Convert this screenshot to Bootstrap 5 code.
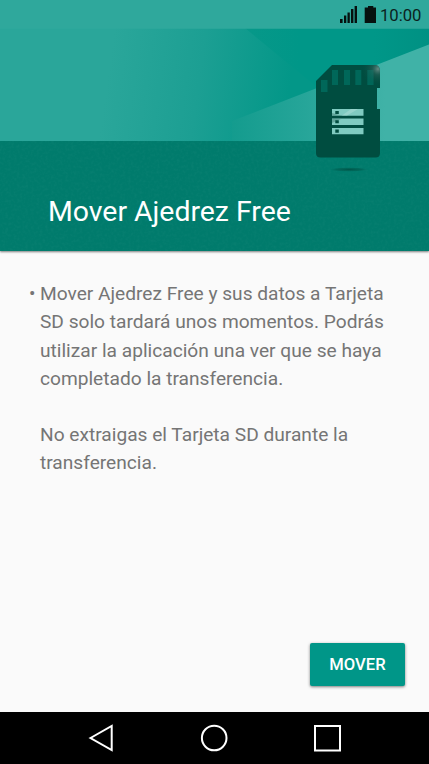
<!DOCTYPE html>
<html lang="es">
<head>
<meta charset="utf-8">
<meta name="viewport" content="width=device-width, initial-scale=1">
<title>Mover Ajedrez Free</title>
<link href="https://cdn.jsdelivr.net/npm/bootstrap@5.3.0/dist/css/bootstrap.min.css" rel="stylesheet">
<style>
body { font-family: Roboto, "Liberation Sans", sans-serif; background: #fafafa; color: #757575; }
.status { height: 28px; padding-right: 7.5px; color: #0b1f1c; }
.clock { font-size: 16.7px; line-height: 31px; margin-left: 4px; }
.hero { height: 251px; box-shadow: 0 1px 2px rgba(0,0,0,.5); }
.hero h1 { font-size: 28.4px; line-height: 34px; padding: 0 0 22px 48px; }
.notes { font-size: 19.15px; line-height: 28.15px; padding: 29.2px 30px 0 29px; }
.bullet { width: 11px; }
.move-btn { --bs-btn-bg: #009688; --bs-btn-color: #fff; --bs-btn-hover-bg: #00897b; --bs-btn-hover-color: #fff;
  --bs-btn-border-radius: 2px; --bs-btn-font-size: 16.6px; --bs-btn-font-weight: 500; --bs-btn-border-width: 0;
  width: 95px; height: 43px; box-shadow: 0 1px 3px rgba(0,0,0,.5); }
.move-btn span { display: block; padding-top: 2px; }
.actions { padding: 0 24px 26px; }
.keys { height: 52px; background: #000; padding: 0 87px; }
</style>
<script src="https://cdn.jsdelivr.net/npm/bootstrap@5.3.0/dist/js/bootstrap.bundle.min.js"></script>
</head>
<body class="vh-100 d-flex flex-column overflow-hidden">
<header class="hero position-relative flex-shrink-0 d-flex flex-column justify-content-between">
  <svg class="position-absolute top-0 start-0" width="429" height="251" viewBox="0 0 429 251" aria-hidden="true">
    <defs>
      <linearGradient id="sky" gradientUnits="userSpaceOnUse" x1="110" y1="60" x2="290" y2="85">
        <stop offset="0" stop-color="#2aa69a"/><stop offset=".5" stop-color="#1c9f93"/><stop offset="1" stop-color="#039788"/>
      </linearGradient>
      <linearGradient id="beam" gradientUnits="userSpaceOnUse" x1="225" y1="0" x2="385" y2="0">
        <stop offset="0" stop-color="#129b8d"/><stop offset=".5" stop-color="#26a599"/><stop offset="1" stop-color="#40b2a7"/>
      </linearGradient>
      <linearGradient id="wedge" gradientUnits="userSpaceOnUse" x1="245" y1="0" x2="429" y2="0">
        <stop offset="0" stop-color="#079889"/><stop offset=".3" stop-color="#009788"/><stop offset=".7" stop-color="#009788"/><stop offset="1" stop-color="#009183"/>
      </linearGradient>
      <radialGradient id="shine" gradientUnits="userSpaceOnUse" cx="378" cy="69" r="17">
        <stop offset="0" stop-color="#7b9a94" stop-opacity=".8"/><stop offset=".35" stop-color="#3c6c64" stop-opacity=".4"/><stop offset="1" stop-color="#004d40" stop-opacity="0"/>
      </radialGradient>
      <radialGradient id="drop"><stop offset="0" stop-color="#00564a"/><stop offset=".6" stop-color="#006557" stop-opacity=".8"/><stop offset="1" stop-color="#00796b" stop-opacity="0"/></radialGradient>
      <filter id="grain" x="0" y="0" width="100%" height="100%">
        <feTurbulence type="fractalNoise" baseFrequency=".35" numOctaves="2" seed="4"/>
        <feColorMatrix values="0 0 0 0 .3  0 0 0 0 .6  0 0 0 0 .55  .5 0 0 0 -.2"/>
      </filter>
    </defs>
    <path fill="url(#sky)" d="M0 28H429V141H0z"/>
    <path fill="url(#wedge)" d="M245 28H429V45L318 88z"/>
    <path fill="url(#beam)" d="M232 121L429 44.500V141H232z"/>
    <path fill="#2fa89c" d="M0 0H429V28.700H0z"/>
    <path fill="#007b6c" d="M0 141H429V251H0z"/>
    <path filter="url(#grain)" opacity=".2" d="M0 141H429V251H0z"/>
    <ellipse cx="349" cy="169.500" rx="21" ry="2.400" fill="url(#drop)"/>
    <path fill="#004d40" d="M332 65H376Q380 66 380 71V88H377V109H380V153Q380 157.500 375.500 157.500H320.500Q316 157.500 316 153V81z"/>
    <path fill="#006759" d="M321 80h6.500v12H321zM332 70h6v15h-6zM344 70h6v15h-6zM355.300 70h6v15h-6zM367.300 70h6.300v15h-6.300z"/>
    <path fill="url(#shine)" d="M332 65H376Q380 66 380 71V88H377V109H380V153H340z"/>
    <path fill="#80cbc1" d="M332 109h31.500v6.700H332zM332 118.500h31.500v6.500H332zM332 128h31.500v6.300H332z"/>
    <path fill="#a6dbd4" d="M342 115.500L351 109H358L347 115.500z" opacity=".6"/>
    <path fill="#4f8d83" d="M332 115.700V113L342 115.700zM332 118.500H342L332 123z" opacity=".6"/>
    <path fill="#004d40" d="M335.300 111h3.500v3h-3.500zM335.300 120.300h3.500v3h-3.500zM335.300 129.500h3.500v3.200h-3.500z"/>
  </svg>
  <div class="status position-relative d-flex justify-content-end align-items-start">
    <svg width="37" height="28" viewBox="339 0 37 28" aria-label="Señal y batería">
      <path fill="#06110f" d="M340 19h2.600v4H340zM344 15.500h2.300V23H344zM347.500 12.500h2.300V23h-2.300zM351 9h2.400v14H351zM354.600 6h2.400v17h-2.400zM368 6h5.300v1.500H376V23H364.700V7.500H368z"/>
    </svg>
    <span class="clock">10:00</span>
  </div>
  <h1 class="position-relative m-0 fw-normal text-white text-nowrap">Mover Ajedrez Free</h1>
</header>
<main class="flex-grow-1 d-flex flex-column justify-content-between">
  <div class="notes d-flex">
    <span class="bullet flex-shrink-0">•</span>
    <div class="text-nowrap">
      <p class="m-0">Mover Ajedrez Free y sus datos a Tarjeta<br>SD solo tardará unos momentos. Podrás<br>utilizar la aplicación una ver que se haya<br>completado la transferencia.</p>
      <br>
      <p class="m-0">No extraigas el Tarjeta SD durante la<br>transferencia.</p>
    </div>
  </div>
  <div class="actions d-flex justify-content-end">
    <button type="button" class="btn move-btn p-0"><span>MOVER</span></button>
  </div>
</main>
<nav class="keys flex-shrink-0 d-flex justify-content-between align-items-center" aria-label="Navegación">
  <svg width="28" height="28" viewBox="0 0 28 28"><path d="M3.500 14L24.700 2V26z" fill="none" stroke="#fff" stroke-width="2"/></svg>
  <svg class="overflow-visible" width="28" height="28" viewBox="0 0 28 28"><circle cx="13.200" cy="14" r="12.300" fill="none" stroke="#fff" stroke-width="2"/></svg>
  <svg width="28" height="28" viewBox="0 0 28 28"><path d="M1 2H26V26.500H1z" fill="none" stroke="#fff" stroke-width="2"/></svg>
</nav>
</body>
</html>
